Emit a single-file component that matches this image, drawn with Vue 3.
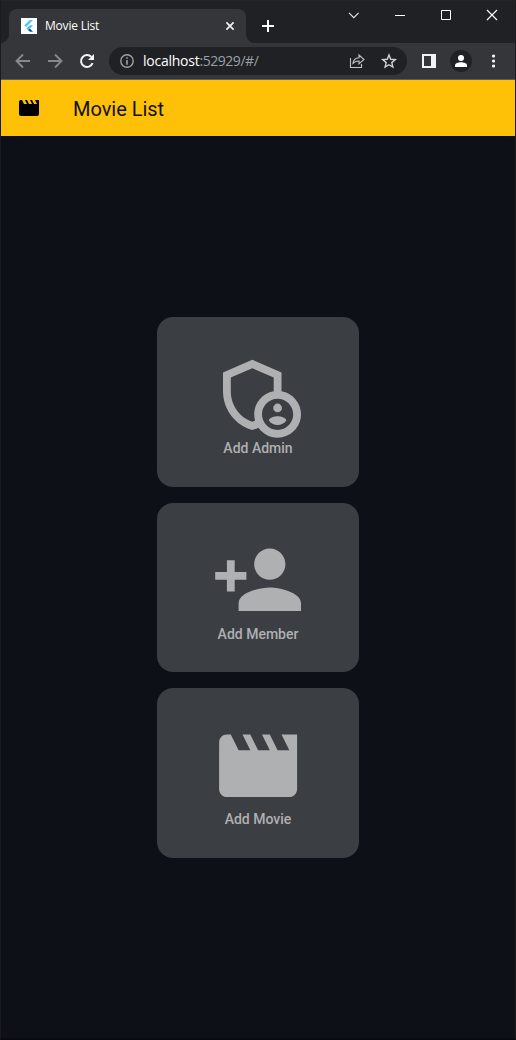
<script setup>
const paths = {
  movie: 'M18 4l2 4h-3l-2-4h-2l2 4h-3l-2-4H8l2 4H7L5 4H4c-1.1 0-1.99.9-1.99 2L2 18c0 1.1.9 2 2 2h16c1.1 0 2-.9 2-2V4h-4z',
  member: 'M15 12c2.21 0 4-1.79 4-4s-1.79-4-4-4-4 1.79-4 4 1.79 4 4 4zm-9-2V7H4v3H1v2h3v3h2v-3h3v-2H6zm9 4c-2.67 0-8 1.34-8 4v2h16v-2c0-2.66-5.33-4-8-4z',
  admin: 'M18 11.09V6.27L10.5 3 3 6.27v4.91c0 4.54 3.2 8.79 7.5 9.82.55-.13 1.08-.32 1.6-.55C13.18 21.99 14.97 23 17 23c3.31 0 6-2.69 6-6 0-2.97-2.16-5.43-5-5.91zM11 17c0 .56.08 1.11.23 1.62-.24.11-.48.22-.73.3-3.17-1-5.5-4.24-5.5-7.74v-3.6l5.5-2.4 5.5 2.4v3.51c-2.84.48-5 2.94-5 5.91zm6 4c-2.21 0-4-1.79-4-4s1.79-4 4-4 4 1.79 4 4-1.79 4-4 4zM17 14.26a1.12 1.12 0 1 0 0 2.24 1.12 1.12 0 0 0 0-2.24zM17 17.5c-.73 0-2.19.36-2.24 1.08.5.71 1.32 1.17 2.24 1.17s1.74-.46 2.24-1.17c-.05-.72-1.51-1.08-2.24-1.08z',
}
const cards = [
  { label: 'Add Admin', icon: paths.admin },
  { label: 'Add Member', icon: paths.member },
  { label: 'Add Movie', icon: paths.movie },
]
</script>

<template>
  <div class="window">
    <div class="strip">
      <div class="tab">
        <svg class="favicon" viewBox="0 0 16 16" width="16" height="16">
          <rect width="16" height="16" fill="#fff" />
          <path d="M8.8 2H12L5.2 9 3.4 7.3z" fill="#54c5f8" />
          <path d="M9 7.2H12L8.8 10.5 7.3 12.3 5.5 10.5z" fill="#47b8f5" />
          <path d="M7.2 12.2L8.9 10.6 12 13.8H9z" fill="#01579b" />
        </svg>
        <span class="tab-title">Movie List</span>
        <svg class="tab-close" viewBox="0 0 10 10" width="10" height="10"><path d="M1.4 1.4l7.2 7.2M8.6 1.4L1.4 8.6" stroke="#f1f3f4" stroke-width="1.7" /></svg>
      </div>
      <svg class="plus" viewBox="0 0 12 12" width="12" height="12"><path d="M6 0v12M0 6h12" stroke="#fff" stroke-width="2" /></svg>
      <div class="controls">
        <svg viewBox="0 0 12 12" width="12" height="12"><path d="M1 3.8L5.8 8.6 10.6 3.8" fill="none" stroke="#e8e9ea" stroke-width="1.1" /></svg>
        <svg viewBox="0 0 12 12" width="12" height="12"><path d="M1 6.5h10" stroke="#fff" /></svg>
        <svg viewBox="0 0 12 12" width="12" height="12"><path d="M1.5 1.5h9v9h-9z" fill="none" stroke="#fff" /></svg>
        <svg viewBox="0 0 12 12" width="12" height="12"><path d="M1 1l10 10M11 1L1 11" stroke="#fff" stroke-width="1.2" /></svg>
      </div>
    </div>
    <div class="toolbar">
      <svg class="back" viewBox="0 0 16 16" width="16" height="16"><path d="M15 8H2M8 1.5L1.5 8 8 14.5" fill="none" stroke="#86888a" stroke-width="1.9" /></svg>
      <svg class="forward" viewBox="0 0 16 16" width="16" height="16"><path d="M1 8h13M8 1.5L14.5 8 8 14.5" fill="none" stroke="#86888a" stroke-width="1.9" /></svg>
      <svg class="reload" viewBox="0 0 16 16" width="16" height="16">
        <path d="M13.6 10.2A6 6 0 1 1 12.4 3.9" fill="none" stroke="#f4f5f6" stroke-width="2" />
        <path d="M15 1v6H9z" fill="#f4f5f6" />
      </svg>
      <div class="address">
        <svg class="info" viewBox="0 0 14 14" width="14" height="14"><circle cx="7" cy="7" r="6.2" fill="none" stroke="#9aa0a6" stroke-width="1.4" /><path d="M7 3.2v1.6M7 6v4.7" stroke="#9aa0a6" stroke-width="1.6" /></svg>
        <span class="url"><span class="host">localhost</span>:52929/#/</span>
        <svg class="share" viewBox="0 0 16 16" width="16" height="16" fill="none" stroke="#c0c2c4" stroke-width="1.1"><path d="M1.5 5v9.5h11V11" /><path d="M4 10.3C4.3 6.8 6.5 5 10 4.8V2l5 4.5-5 4.3V8C7.5 7.9 5.5 8.7 4 10.3z" /></svg>
        <svg class="star" viewBox="0 0 16 16" width="16" height="16"><path d="M8 2l1.7 4.3 4.6.3-3.5 3 1.1 4.5L8 11.7l-3.9 2.4 1.1-4.5-3.5-3 4.6-.3z" fill="none" stroke="#d0d2d4" stroke-width="1.4" /></svg>
      </div>
      <svg class="panel" viewBox="0 0 14 14" width="14" height="14"><path d="M1 1h12v12H1z" fill="none" stroke="#f1f3f4" stroke-width="2" /><path d="M9 1h4v12H9z" fill="#f1f3f4" /></svg>
      <svg class="avatar" viewBox="0 0 22 22" width="22" height="22"><circle cx="11" cy="11" r="11" fill="#202124" /><circle cx="11" cy="8" r="3" fill="#fff" /><path d="M5 17v-1.5C5 13.3 8 12.3 11 12.3s6 1 6 3.2V17z" fill="#fff" /></svg>
      <svg class="dots" viewBox="0 0 4 14" width="4" height="14" fill="#f1f3f4"><circle cx="2.5" cy="2" r="1.6" /><circle cx="2.5" cy="7" r="1.6" /><circle cx="2.5" cy="12" r="1.6" /></svg>
    </div>
    <header class="appbar">
      <svg viewBox="0 0 24 24" width="24" height="24"><path :d="paths.movie" /></svg>
      <h1>Movie List</h1>
    </header>
    <main>
      <button v-for="card in cards" :key="card.label" class="card">
        <svg viewBox="0 0 94 94"><path :d="card.icon" fill-rule="evenodd" transform="translate(0.3 0) scale(3.9)" /></svg>
        <span>{{ card.label }}</span>
      </button>
    </main>
  </div>
</template>

<style>
body { background: #0d1117; overflow: hidden; }
</style>

<style scoped>
* { box-sizing: border-box; }
svg { display: block; flex: none; }
.window { width: 516px; height: 1040px; display: flex; flex-direction: column; border: solid #1b1b1b; border-width: 0 1px; border-bottom: 2px solid #0a0b10; background: #0d1117; }
.strip { height: 43px; flex: none; display: flex; align-items: flex-start; background: #202124; border-top: 1px solid #242622; }
.tab { position: relative; display: flex; align-items: center; width: 237px; height: 34px; margin: 8px 0 0 8px; padding: 0 11px 0 12px; border-radius: 8px 8px 0 0; background: #35363a; }
.tab::before, .tab::after { content: ''; position: absolute; bottom: 0; width: 8px; height: 8px; }
.tab::before { left: -8px; background: radial-gradient(circle at 0 0, transparent 7.5px, #35363a 8px); }
.tab::after { right: -8px; background: radial-gradient(circle at 100% 0, transparent 7.5px, #35363a 8px); }
.tab-title { margin-left: 8px; color: #fff; font: 12px/16px "Open Sans", sans-serif; letter-spacing: -0.2px; }
.tab-close { margin-left: auto; }
.plus { margin: 19px 0 0 16px; }
.controls { display: flex; gap: 34px; margin: 8px 17px 0 auto; }
.toolbar { display: flex; align-items: center; flex: none; height: 37px; border-bottom: 1px solid #5b5c5f; background: #35363a; }
.back { margin-left: 14px; }
.forward { margin-left: 16px; }
.reload { margin-left: 16px; }
.address { display: flex; align-items: center; width: 298px; height: 28px; margin-left: 14px; padding: 0 10px 0 11px; border-radius: 14px; background: #202124; }
.url { margin-left: 9px; color: #9aa0a6; font: 14px/20px "Open Sans", sans-serif; letter-spacing: -0.45px; }
.host { color: #fff; letter-spacing: -0.25px; }
.share { margin-left: auto; }
.star { margin-left: 16px; }
.panel { margin-left: 15px; }
.avatar { margin-left: 14px; }
.dots { margin-left: 19px; }
.appbar { display: flex; align-items: center; flex: none; height: 56px; padding-left: 16px; background: #ffc107; }
h1 { margin: 2px 0 0 32px; color: #111; font: 400 20px/24px Roboto, sans-serif; letter-spacing: -0.03px; }
main { flex: 1; display: flex; flex-direction: column; align-items: center; padding-top: 181.2px; gap: 16px; }
.card { display: flex; flex-direction: column; align-items: center; width: 202px; height: 169.6px; padding: 30.6px 0 0; border: 0; border-radius: 16px; background: #3b3e42; color: #afb0b2; }
.card svg { width: 94px; height: 94px; fill: #afb0b2; }
.card span { margin-top: -1.7px; font: 500 14px/16px Roboto, sans-serif; }
</style>
